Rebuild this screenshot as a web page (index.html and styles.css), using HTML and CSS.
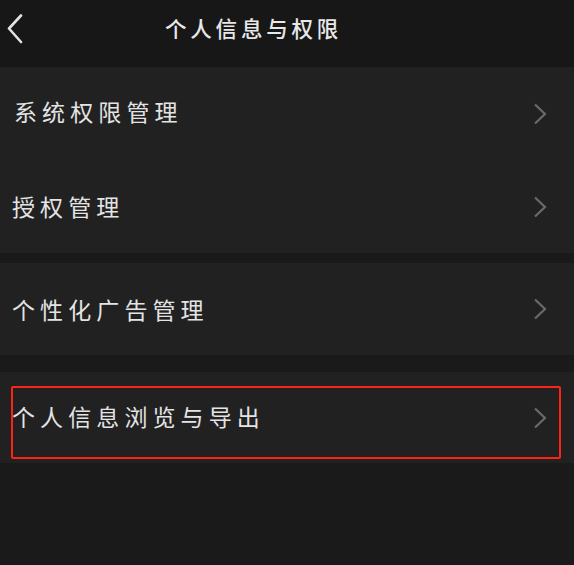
FILE: index.html
```html
<!DOCTYPE html>
<html lang="zh-CN">
<head>
<meta charset="utf-8">
<title>个人信息与权限</title>
<link rel="stylesheet" href="styles.css">
</head>
<body>
<div class="page">
  <header class="topbar">
    <span class="back">
      <svg width="16" height="30" viewBox="0 0 16 30"><path d="M14 1.5 L2 14.5 L14 28" fill="none" stroke="#e2e2e2" stroke-width="2.6" stroke-linecap="round" stroke-linejoin="round"/></svg>
    </span>
    <h1 class="title">个人信息与权限</h1>
  </header>

  <section class="group g1">
    <div class="row r1"><span class="label">系统权限管理</span><span class="chev"><svg width="14" height="22" viewBox="0 0 14 22"><path d="M2 1.5 L12 11 L2 20.5" fill="none" stroke="#6a6a6a" stroke-width="2.2"/></svg></span></div>
    <div class="row r2"><span class="label">授权管理</span><span class="chev"><svg width="14" height="22" viewBox="0 0 14 22"><path d="M2 1.5 L12 11 L2 20.5" fill="none" stroke="#6a6a6a" stroke-width="2.2"/></svg></span></div>
  </section>

  <section class="group g2">
    <div class="row r3"><span class="label">个性化广告管理</span><span class="chev"><svg width="14" height="22" viewBox="0 0 14 22"><path d="M2 1.5 L12 11 L2 20.5" fill="none" stroke="#6a6a6a" stroke-width="2.2"/></svg></span></div>
  </section>

  <section class="group g3">
    <div class="row r4"><span class="label">个人信息浏览与导出</span><span class="chev"><svg width="14" height="22" viewBox="0 0 14 22"><path d="M2 1.5 L12 11 L2 20.5" fill="none" stroke="#6a6a6a" stroke-width="2.2"/></svg></span>
      <span class="highlight"></span>
    </div>
  </section>
</div>
</body>
</html>
```

FILE: styles.css
```css
html, body {
  margin: 0;
  padding: 0;
  background: #1a1a1a;
}
.page {
  width: 574px;
  height: 565px;
  background: #1a1a1a;
  font-family: "Noto Sans CJK SC", "Noto Sans", sans-serif;
  color: #e4e4e4;
  overflow: hidden;
}
.topbar {
  height: 67px;
  background: #171717;
  display: flex;
  align-items: center;
}
.back {
  width: 24px;
  padding-left: 7px;
  display: flex;
  align-items: center;
  margin-bottom: 10px;
}
.title {
  margin: 0 0 12px 134px;
  font-size: 21.5px;
  font-weight: 500;
  letter-spacing: 3.8px;
  line-height: 1;
  color: #e8e8e8;
}
.group {
  background: #212121;
}
.g2 {
  margin-top: 10px;
}
.g3 {
  margin-top: 17px;
}
.row {
  position: relative;
  display: flex;
  align-items: center;
  justify-content: space-between;
  padding: 0 27px 0 12px;
}
.r1 { height: 93px; }
.r2 { height: 93px; }
.r3 { height: 92px; }
.r4 { height: 91px; }
.r1 .label { padding-left: 2px; margin-bottom: 4px; }
.r2 .label { margin-bottom: 1px; }
.r4 .label { margin-bottom: 2px; }
.label {
  font-size: 23px;
  letter-spacing: 5.1px;
  line-height: 1;
  color: #e4e4e4;
}
.chev {
  display: flex;
  align-items: center;
}
.highlight {
  position: absolute;
  left: 11px;
  top: 14px;
  width: 546px;
  height: 69px;
  border: 2.5px solid #ff2217;
  border-radius: 2px;
}
```
